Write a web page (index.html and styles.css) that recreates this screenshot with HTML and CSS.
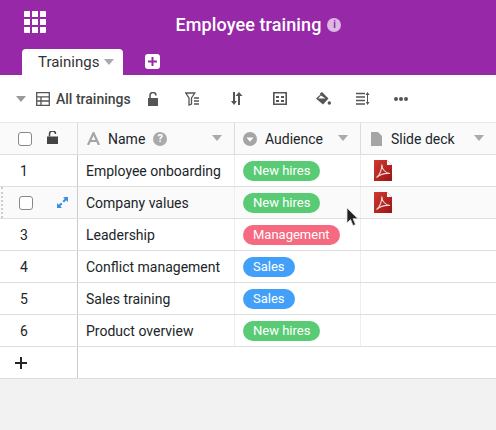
FILE: index.html
```html
<!DOCTYPE html>
<html>
<head>
	<meta charset="utf-8">
	<title>Employee training</title>
	<link rel="stylesheet" href="styles.css">
</head>
<body>
	<div class="header">
		<div class="titlebar">
			<svg class="apps" width="22" height="22" viewBox="0 0 22 22"><path fill="#fff" d="M1 0h5v6H0V1a1 1 0 0 1 1-1zM8 0h6v6H8zM16 0h5a1 1 0 0 1 1 1v5h-6zM0 8h6v6H0zM8 8h6v6H8zM16 8h6v6h-6zM0 16h6v6H1a1 1 0 0 1-1-1zM8 16h6v6H8zM16 16h6v5a1 1 0 0 1-1 1h-5z"/></svg>
			<span class="title">Employee training</span>
			<span class="info">i</span>
		</div>
		<div class="tabs">
			<div class="tab">Trainings <span class="caret"></span></div>
			<div class="addtab"><svg width="9" height="9" viewBox="0 0 9 9"><path stroke="#9729a8" stroke-width="2" d="M4.500 0v9M0 4.500h9"/></svg></div>
		</div>
	</div>

	<div class="toolbar">
		<span class="caret big"></span>
		<svg class="viewicon" width="14" height="14" viewBox="0 0 14 14"><path fill="none" stroke="#555" stroke-width="1.3" d="M.7.7h12.6v12.6H.7zM.7 4.800h12.600M.7 9h12.600M5 4.800v8.500"/></svg>
		<span class="viewname">All trainings</span>
		<svg class="tool lock" width="12" height="14" viewBox="0 0 12 14"><path fill="#555" d="M1 6h10v8H1z"/><path fill="none" stroke="#555" stroke-width="1.6" d="M3 6V3.500a3 3 0 0 1 6 0"/></svg>
		<svg class="tool filter" width="15" height="14" viewBox="0 0 15 14"><path fill="none" stroke="#555" stroke-width="1.3" d="M.8 1h9L6.500 6v6L4 13V6z"/><path stroke="#555" stroke-width="1.4" d="M9 6h5M9 9h5M9 12h5"/></svg>
		<svg class="tool sort" width="13" height="13" viewBox="0 0 13 13"><path fill="#555" d="M3 0h2v9h2l-3 4-3-4h2zM10 13H8V4H5.500l3.500-4 3.500 4H10z"/></svg>
		<svg class="tool group" width="14" height="13" viewBox="0 0 14 13"><path fill="none" stroke="#555" stroke-width="1.6" d="M.8.800h12.400v11.400H.8z"/><path stroke="#555" stroke-width="2" d="M3 5h3M8 5h3M3 9h3M8 9h3"/></svg>
		<svg class="tool paint" width="15" height="14" viewBox="0 0 15 14"><path fill="#555" d="M6 0l6.500 6.500L7 12.500 0 6.500 4.500 2.500 3.800 1.500z"/><path fill="#fff" d="M5 3.500l4.500 3H2z"/><circle cx="13.300" cy="11" r="1.700" fill="#555"/></svg>
		<svg class="tool height" width="14" height="13" viewBox="0 0 14 13"><path stroke="#555" stroke-width="1.500" d="M0 1.500h9M0 5h9M0 8.500h9M0 12h9"/><path fill="#555" d="M11 3h1v7h1.500L11.500 13 9.800 10H11zM11.500 0L13.500 3h-4z"/></svg>
		<span class="dots"><i></i><i></i><i></i></span>
	</div>

	<div class="table">
		<div class="row head">
			<div class="cell first">
				<span class="check"></span>
				<svg class="headlock" width="11" height="13" viewBox="0 0 11 13"><path fill="#444" d="M0 5.500h11V13H0z"/><path fill="none" stroke="#444" stroke-width="1.500" d="M2.500 5.500V3a3 3 0 0 1 6 0"/></svg>
			</div>
			<div class="cell col">
				<svg class="coltype name" width="13" height="13" viewBox="0 0 13 13"><path fill="none" stroke="#a5a5a5" stroke-width="2.200" d="M1 13L6.500 1 12 13M3 9h7"/></svg>
				<span>Name</span>
				<span class="help">?</span>
				<span class="caret end"></span>
			</div>
			<div class="cell col">
				<svg class="coltype" width="14" height="14" viewBox="0 0 14 14"><circle cx="7" cy="7" r="7" fill="#a5a5a5"/><path fill="#fff" d="M3.500 5.500h7L7 9.800z"/></svg>
				<span>Audience</span>
				<span class="caret end"></span>
			</div>
			<div class="cell col">
				<svg class="coltype file" width="11" height="14" viewBox="0 0 11 14"><path fill="#a5a5a5" d="M0 0h7l4 4v10H0z"/></svg>
				<span>Slide deck</span>
				<span class="caret end"></span>
			</div>
		</div>

		<div class="row">
			<div class="cell first"><span class="num">1</span></div>
			<div class="cell">Employee onboarding</div>
			<div class="cell"><span class="pill green">New hires</span></div>
			<div class="cell">
				<svg class="pdf" width="18" height="21" viewBox="0 0 18 21"><defs><linearGradient id="pdfred" x1="0" y1="0" x2="1" y2="1"><stop offset="0" stop-color="#cf3a32"/><stop offset="1" stop-color="#9c1414"/></linearGradient></defs><path fill="url(#pdfred)" d="M0 0h13l5 5v16H0z"/><path fill="#fff" d="M13 0l5 5h-5z"/><path fill="none" stroke="#f3d6d6" stroke-width="1.100" d="M2.500 17.500C6 15 8 9 7.800 4.500 8 9 11 13 16 13.500 11 13 6 14.500 2.500 17.500z"/></svg>
			</div>
		</div>
		<div class="row hover">
			<div class="cell first">
				<span class="grip"></span>
				<span class="check shifted"></span>
				<svg class="expand" width="11" height="11" viewBox="0 0 11 11"><path fill="#3b8fe0" d="M6 0h5v5L9.200 3.300 7 5.500 5.500 4l2.200-2.200zM0 11V6l1.800 1.700L4 5.500 5.500 7 3.300 9.200 5 11z"/></svg>
			</div>
			<div class="cell">Company values</div>
			<div class="cell"><span class="pill green">New hires</span></div>
			<div class="cell">
				<svg class="pdf" width="18" height="21" viewBox="0 0 18 21"><path fill="url(#pdfred)" d="M0 0h13l5 5v16H0z"/><path fill="#fff" d="M13 0l5 5h-5z"/><path fill="none" stroke="#f3d6d6" stroke-width="1.100" d="M2.500 17.500C6 15 8 9 7.800 4.500 8 9 11 13 16 13.500 11 13 6 14.500 2.500 17.500z"/></svg>
			</div>
		</div>
		<div class="row">
			<div class="cell first"><span class="num">3</span></div>
			<div class="cell">Leadership</div>
			<div class="cell"><span class="pill red">Management</span></div>
			<div class="cell"></div>
		</div>
		<div class="row">
			<div class="cell first"><span class="num">4</span></div>
			<div class="cell">Conflict management</div>
			<div class="cell"><span class="pill blue">Sales</span></div>
			<div class="cell"></div>
		</div>
		<div class="row">
			<div class="cell first"><span class="num">5</span></div>
			<div class="cell">Sales training</div>
			<div class="cell"><span class="pill blue">Sales</span></div>
			<div class="cell"></div>
		</div>
		<div class="row">
			<div class="cell first"><span class="num">6</span></div>
			<div class="cell">Product overview</div>
			<div class="cell"><span class="pill green">New hires</span></div>
			<div class="cell"></div>
		</div>
		<div class="row add">
			<div class="cell first"><svg class="plus" width="12" height="12" viewBox="0 0 12 12"><path stroke="#212529" stroke-width="2" d="M6 0v12M0 6h12"/></svg></div>
			<div class="cell wide"></div>
		</div>
	</div>

	<svg class="cursor" width="13" height="20" viewBox="0 0 13 20"><path fill="#222" stroke="#ddd" stroke-width=".8" d="M1 1v15l3.500-3.500 2.500 6 2.500-1-2.500-5.800h5z"/></svg>
</body>
</html>
```

FILE: styles.css
```css
* {
	box-sizing: border-box;
}
body {
	margin: 0;
	height: 430px;
	overflow: hidden;
	position: relative;
	background: #f2f2f2;
	font-family: Roboto, sans-serif;
	font-size: 14px;
	color: #212529;
}

/* header */
.header {height: 75px; background: #9729a8; display: flex; flex-direction: column;}
.titlebar {height: 49px; display: flex; align-items: center; justify-content: center; position: relative; padding-left: 21px;}
.apps {position: absolute; left: 24px; top: 11px;}
.title {color: #fff; font-size: 18px; font-weight: 500; letter-spacing: .1px;}
.info {width: 14px; height: 14px; margin-left: 6px; border-radius: 50%; background: #dcb8e2; color: #9729a8; font-size: 10px; font-weight: 700; text-align: center; line-height: 14px;}
.tabs {display: flex; align-items: flex-start; padding-left: 22px;}
.tab {width: 101px; height: 26px; background: #fff; border-radius: 4px 4px 0 0; padding-left: 16px; font-size: 15px; line-height: 27px; color: #333; display: flex; align-items: center; gap: 5px;}
.addtab {width: 15px; height: 15px; margin: 5px 0 0 22px; background: #fff; border-radius: 3px; display: flex; align-items: center; justify-content: center;}
.caret {display: inline-block; width: 0; height: 0; border-left: 5px solid transparent; border-right: 5px solid transparent; border-top: 6px solid #aaa;}
.caret.big {border-top-color: #999;}

/* toolbar */
.toolbar {height: 47px; background: #fff; display: flex; align-items: center; padding-left: 16px;}
.viewicon {margin-left: 10px;}
.viewname {margin-left: 6px; color: #444; font-size: 14px; font-weight: 500; width: 89px;}
.tool {flex: none;}
.lock {margin-left: 2px;}
.filter {margin-left: 26px;}
.sort {margin-left: 30px;}
.group {margin-left: 30px;}
.paint {margin-left: 29px;}
.height {margin-left: 25px;}
.dots {display: flex; gap: 1px; margin-left: 24px;}
.dots i {width: 4px; height: 4px; border-radius: 50%; background: #555;}

/* table */
.table {background: #fff; border-top: 1px solid #e8e8e8;}
.row {display: grid; grid-template-columns: 78px 157px 126px 1fr; height: 32px; border-bottom: 1px solid #dedede;}
.row.head {background: #fafafa;}
.row.hover {background: #fafafa;}
.row.add {grid-template-columns: 78px 1fr;}
.cell {display: flex; align-items: center; padding-left: 8px; border-right: 1px solid #eee; color: #212529; position: relative;}
.cell.first {border-right: 1px solid #ccc; padding-left: 18px;}
.cell.wide {border-right: 0;}
.cell:last-child {border-right: 0;}
.row.head .cell {border-right-color: #ddd;}
.col {gap: 8px;}
.col .end {position: absolute; right: 12px; top: 12px;}
.coltype {flex: none;}
.coltype.name {margin-left: 1px;}
.coltype.file {margin-left: 2px; margin-right: 1px;}
.check {width: 14px; height: 14px; border: 1px solid #888; border-radius: 3px; background: #fff;}
.check.shifted {margin-left: 1px;}
.headlock {position: absolute; left: 47px; top: 8px;}
.help {width: 14px; height: 14px; border-radius: 50%; background: #aaa; color: #fff; font-size: 11px; font-weight: 700; text-align: center; line-height: 14px;}
.num {width: 14px; padding-left: 2px;}
.grip {position: absolute; left: 1px; top: 0; bottom: 0; border-left: 2px dotted #ccc;}
.expand {position: absolute; left: 57px; top: 10px;}
.plus {margin-left: -3px;}
.pill {height: 20px; line-height: 20px; border-radius: 10px; padding: 0 10px; color: #fff; font-size: 13px; white-space: nowrap;}
.green {background: #59cb74;}
.red {background: #f56a81;}
.blue {background: #42a0f9;}
.pdf {margin-left: 5px; margin-top: -1px;}

/* mouse pointer over the table */
.cursor {position: absolute; left: 346px; top: 207px;}
```
